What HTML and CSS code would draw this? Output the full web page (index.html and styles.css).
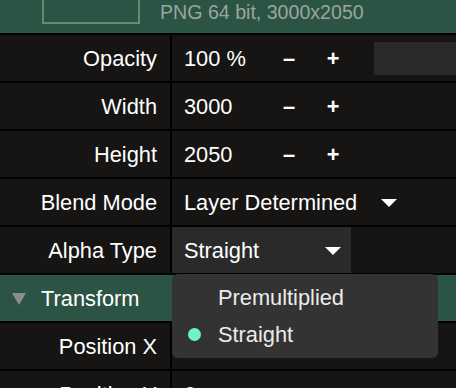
FILE: index.html
```html
<!DOCTYPE html>
<html>
<head>
<meta charset="utf-8">
<link rel="stylesheet" href="styles.css">
</head>
<body>
<div class="panel">
  <div class="header">
    <div class="thumb"></div>
    <div class="info">PNG 64 bit, 3000x2050</div>
  </div>
  <div class="rows">
    <div class="row">
      <div class="label">Opacity</div>
      <div class="value">
        <span class="num">100 %</span>
        <span class="btn">&#8211;</span>
        <span class="btn">+</span>
        <span class="swatch"></span>
      </div>
    </div>
    <div class="row">
      <div class="label">Width</div>
      <div class="value">
        <span class="num">3000</span>
        <span class="btn">&#8211;</span>
        <span class="btn">+</span>
      </div>
    </div>
    <div class="row">
      <div class="label">Height</div>
      <div class="value">
        <span class="num">2050</span>
        <span class="btn">&#8211;</span>
        <span class="btn">+</span>
      </div>
    </div>
    <div class="row">
      <div class="label">Blend Mode</div>
      <div class="value">
        <span>Layer Determined</span>
        <span class="caret caret-blend"></span>
      </div>
    </div>
    <div class="row">
      <div class="label">Alpha Type</div>
      <div class="value">
        <div class="select">
          <span>Straight</span>
          <span class="caret"></span>
        </div>
      </div>
    </div>
    <div class="row section">
      <span class="disclosure"></span>
      <span>Transform</span>
    </div>
    <div class="row">
      <div class="label">Position X</div>
      <div class="value"><span>0</span></div>
    </div>
    <div class="row">
      <div class="label">Position Y</div>
      <div class="value"><span>0</span></div>
    </div>
  </div>
  <div class="menu">
    <div class="item"><span class="mark"></span><span>Premultiplied</span></div>
    <div class="item"><span class="mark on"></span><span>Straight</span></div>
  </div>
</div>
</body>
</html>
```

FILE: styles.css
```css
* { box-sizing: border-box; }
html, body {
  margin: 0;
  padding: 0;
  background: #000;
  overflow: hidden;
}
body {
  font-family: "Liberation Sans", Arial, sans-serif;
  font-size: 21.8px;
  color: #ffffff;
  width: 456px;
  height: 388px;
}
.panel {
  position: relative;
  width: 456px;
  height: 388px;
  overflow: hidden;
}
.header {
  height: 33px;
  background: #2c5444;
  display: flex;
  align-items: flex-end;
  overflow: hidden;
}
.thumb {
  width: 98px;
  height: 60px;
  margin-left: 42px;
  margin-bottom: 9px;
  border: 2px solid #6a8878;
  flex: none;
}
.info {
  align-self: center;
  margin-left: 20px;
  margin-top: -8px;
  font-size: 19.6px;
  color: #9aa59f;
}
.rows {
  display: flex;
  flex-direction: column;
  gap: 2px;
  padding-top: 2px;
  background: #000;
}
.row {
  height: 46px;
  display: grid;
  grid-template-columns: 170px 1fr;
  column-gap: 2px;
  background: #000;
  flex: none;
}
.label, .value {
  background: #161514;
  display: flex;
  align-items: center;
  padding-top: 1px;
}
.label {
  justify-content: flex-end;
  padding-right: 13px;
}
.value {
  padding-left: 12px;
}
.num {
  width: 83px;
}
.btn {
  width: 44px;
  text-align: center;
  font-weight: bold;
}
.swatch {
  margin-left: 19px;
  margin-top: -1px;
  width: 82px;
  height: 33px;
  background: #2a2a2a;
}
.caret {
  width: 0;
  height: 0;
  border-left: 8px solid transparent;
  border-right: 8px solid transparent;
  border-top: 8px solid #ffffff;
  margin-top: 1px;
}
.caret-blend {
  margin-left: 24px;
}
.value:has(.select) {
  padding-left: 0;
  padding-top: 0;
}
.select {
  width: 179px;
  height: 100%;
  background: #2a2a2a;
  display: flex;
  align-items: center;
  justify-content: space-between;
  padding-left: 12px;
  padding-right: 10px;
  padding-top: 1px;
}
.section {
  display: flex;
  align-items: center;
  background: #2c5444;
  padding-top: 1px;
}
.disclosure {
  width: 0;
  height: 0;
  border-left: 7.5px solid transparent;
  border-right: 7.5px solid transparent;
  border-top: 12px solid #8c8c8c;
  margin-left: 12px;
  margin-right: 13px;
  margin-top: 1px;
}
.menu {
  position: absolute;
  left: 172px;
  top: 274px;
  width: 266px;
  height: 84px;
  background: #333333;
  border-radius: 6px;
  padding-top: 5px;
  color: #ececec;
}
.item {
  height: 37px;
  display: flex;
  align-items: center;
}
.mark {
  width: 13px;
  height: 13px;
  border-radius: 50%;
  margin-left: 16px;
  margin-right: 17px;
}
.mark.on {
  background: #72f2c8;
}
```
